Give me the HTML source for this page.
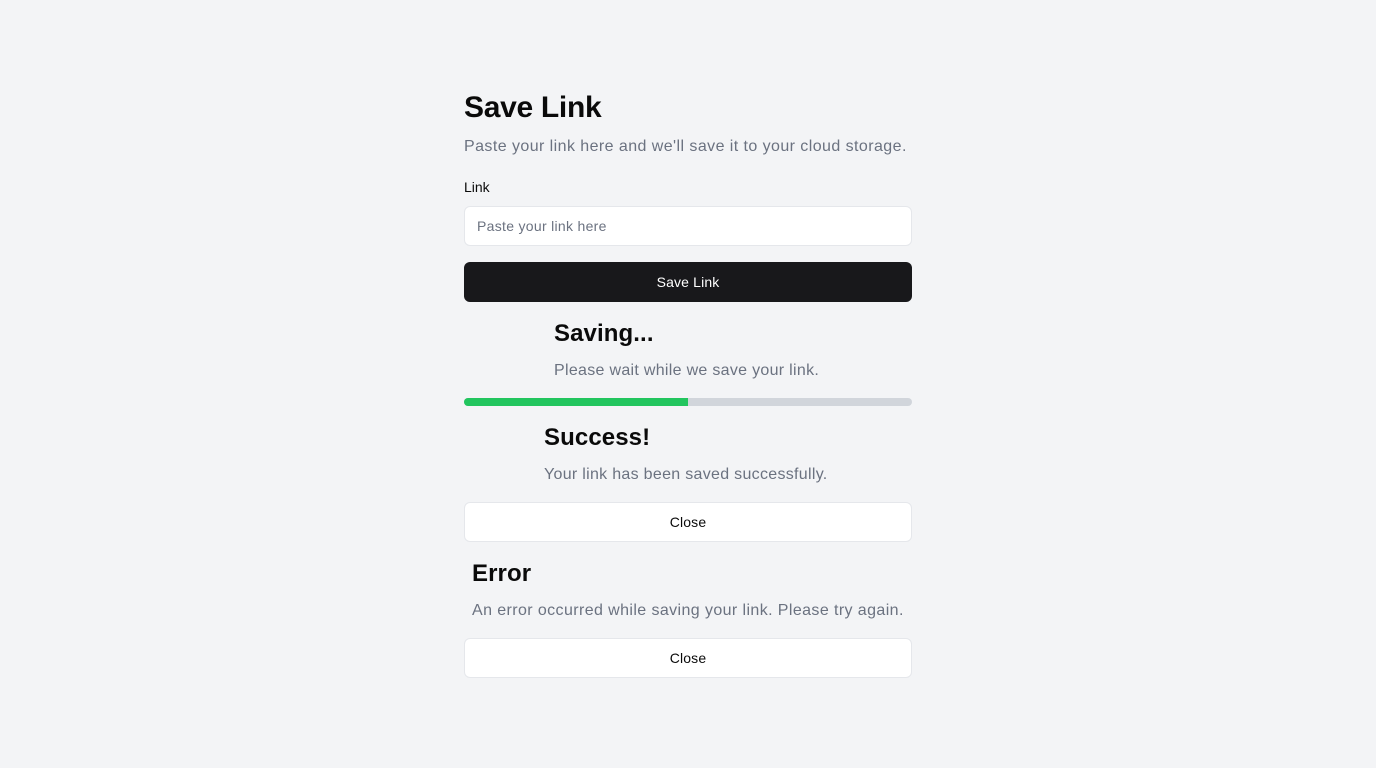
<!DOCTYPE html>
<html><head><style>
*{box-sizing:border-box;margin:0;padding:0}
body{width:1376px;height:768px;background:#f3f4f6;font-family:"Liberation Sans",sans-serif;position:relative;overflow:hidden}
.a{position:absolute}
h1{font-size:30px;font-weight:700;color:#0a0a0a;letter-spacing:-0.3px}
.h2{font-size:24px;font-weight:700;color:#0a0a0a;letter-spacing:0.1px}
.p{font-size:16px;color:#6b7280;letter-spacing:0.3px}
.btn{position:absolute;left:464px;width:448px;height:40px;border-radius:6px;display:flex;align-items:center;justify-content:center;font-size:14px;letter-spacing:0.15px}
</style></head><body>
<h1 class="a" style="left:464px;top:91px">Save Link</h1>
<div class="a p" style="left:464px;top:138px;letter-spacing:0.43px">Paste your link here and we'll save it to your cloud storage.</div>
<div class="a" style="left:464px;top:179px;font-size:14px;color:#0a0a0a">Link</div>
<div class="btn" style="top:206px;background:#fff;border:1px solid #e5e7eb;justify-content:flex-start;padding-left:12px;color:#6b7280;letter-spacing:0.3px">Paste your link here</div>
<div class="btn" style="top:262px;background:#18181b;color:#fff">Save Link</div>
<div class="a h2" style="left:554px;top:320px">Saving...</div>
<div class="a p" style="left:554px;top:362px">Please wait while we save your link.</div>
<div class="a" style="left:464px;top:398px;width:448px;height:8px;background:#d1d5db;border-radius:4px;overflow:hidden"><div style="width:224px;height:8px;background:#22c55e"></div></div>
<div class="a h2" style="left:544px;top:424px">Success!</div>
<div class="a p" style="left:544px;top:466px">Your link has been saved successfully.</div>
<div class="btn" style="top:502px;background:#fff;border:1px solid #e5e7eb;color:#0a0a0a">Close</div>
<div class="a h2" style="left:472px;top:560px">Error</div>
<div class="a p" style="left:472px;top:602px;letter-spacing:0.4px">An error occurred while saving your link. Please try again.</div>
<div class="btn" style="top:638px;background:#fff;border:1px solid #e5e7eb;color:#0a0a0a">Close</div>
</body></html>
